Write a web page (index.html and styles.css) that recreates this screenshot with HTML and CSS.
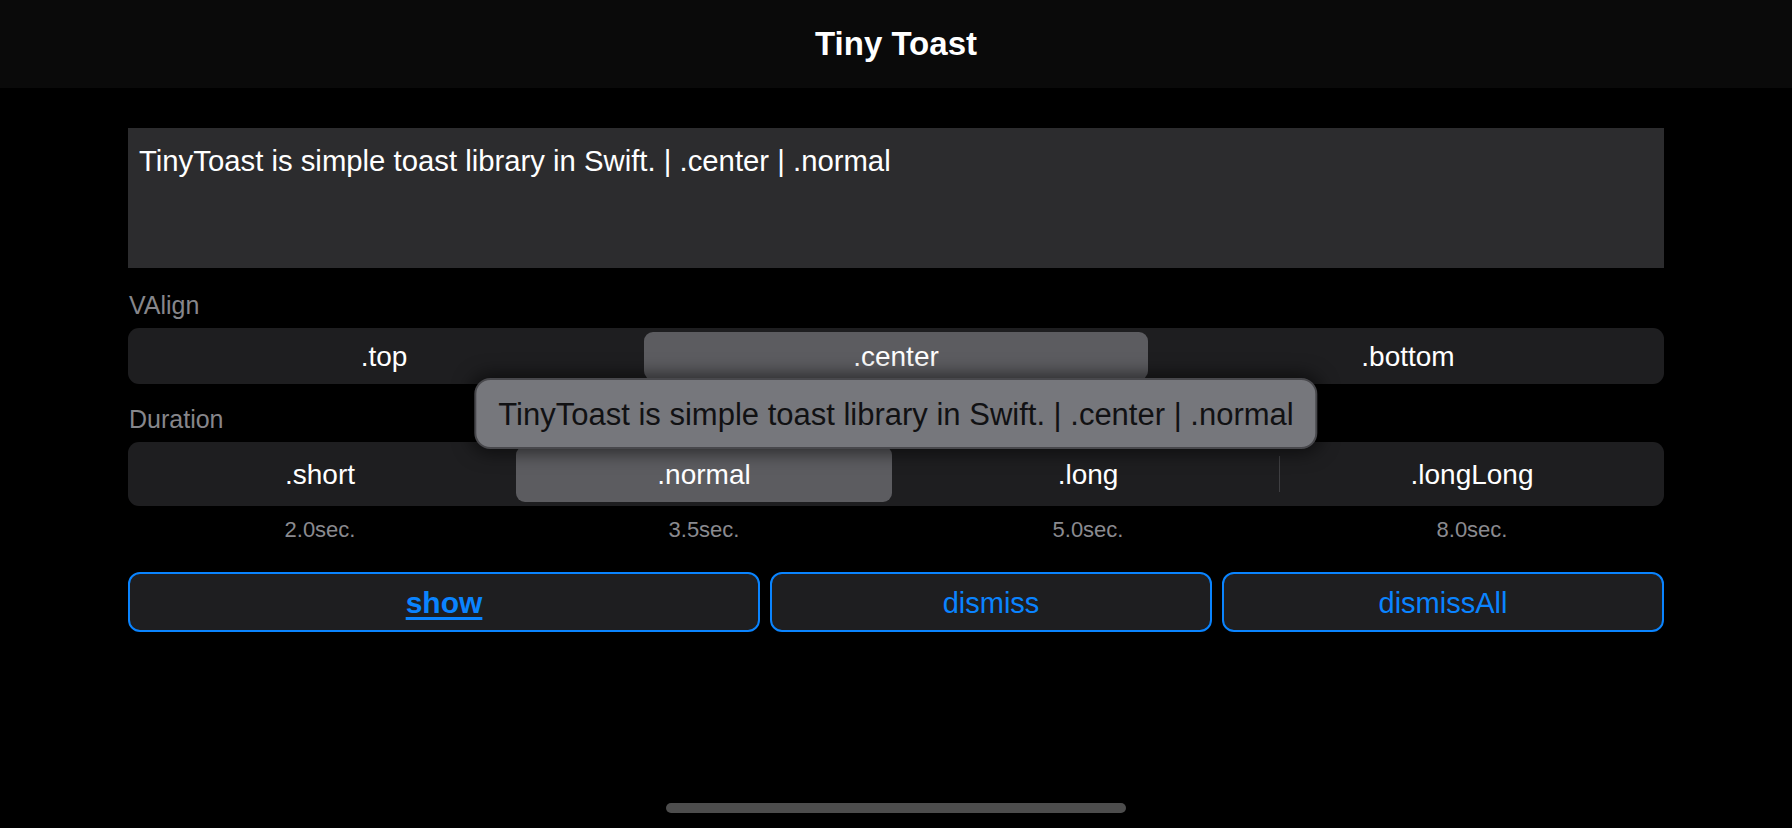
FILE: index.html
```html
<!DOCTYPE html>
<html lang="en">
<head>
<meta charset="utf-8">
<title>Tiny Toast</title>
<link rel="stylesheet" href="styles.css">
</head>
<body>
<div class="screen">
  <header class="navbar"><h1 class="nav-title">Tiny Toast</h1></header>
  <main class="content">
    <div class="textview">TinyToast is simple toast library in Swift. | .center | .normal</div>

    <div class="field-label label-valign">VAlign</div>
    <div class="segmented seg-3">
      <div class="seg">.top</div>
      <div class="seg selected">.center</div>
      <div class="seg">.bottom</div>
    </div>

    <div class="field-label label-duration">Duration</div>
    <div class="segmented seg-4">
      <div class="seg">.short</div>
      <div class="seg selected">.normal</div>
      <div class="seg">.long</div>
      <div class="seg divided">.longLong</div>
    </div>
    <div class="durations">
      <span>2.0sec.</span>
      <span>3.5sec.</span>
      <span>5.0sec.</span>
      <span>8.0sec.</span>
    </div>

    <div class="actions">
      <button class="btn btn-primary">show</button>
      <button class="btn">dismiss</button>
      <button class="btn">dismissAll</button>
    </div>
  </main>

  <div class="toast">TinyToast is simple toast library in Swift. | .center | .normal</div>
  <div class="home-indicator"></div>
</div>
</body>
</html>
```

FILE: styles.css
```css
* { box-sizing: border-box; }

html, body {
  margin: 0;
  padding: 0;
  background: #000;
}

body {
  font-family: "Liberation Sans", Arial, sans-serif;
  color: #fff;
}

.screen {
  position: relative;
  width: 1792px;
  height: 828px;
  overflow: hidden;
  background: #000;
}

.navbar {
  height: 88px;
  background: #0a0a0a;
  display: flex;
  align-items: center;
  justify-content: center;
}

.nav-title {
  margin: 0;
  font-size: 33px;
  font-weight: bold;
  color: #fff;
}

.content {
  padding: 40px 128px 0;
  display: flex;
  flex-direction: column;
}

.textview {
  height: 140px;
  background: #2c2c2e;
  padding: 16px 11px 0;
  font-size: 29.3px;
  line-height: 34px;
  color: #fff;
}

.field-label {
  font-size: 25px;
  line-height: 28px;
  color: #86868b;
  margin-left: 1px;
}

.label-valign { margin-top: 23px; margin-bottom: 9px; }
.label-duration { margin-top: 21px; margin-bottom: 9px; }

.segmented {
  display: grid;
  background: #1e1e20;
  border-radius: 11px;
}

.seg-3 { grid-template-columns: repeat(3, 1fr); height: 56px; }
.seg-4 { grid-template-columns: repeat(4, 1fr); height: 64px; }

.seg {
  position: relative;
  display: flex;
  align-items: center;
  justify-content: center;
  padding-top: 2px;
  font-size: 28px;
  color: #fff;
}

.seg.selected {
  margin: 4px;
  background: #5c5c60;
  border-radius: 9px;
}

.seg.divided::before {
  content: "";
  position: absolute;
  left: -1px;
  top: 14px;
  bottom: 14px;
  width: 1px;
  background: #3f3f42;
}

.durations {
  display: grid;
  grid-template-columns: repeat(4, 1fr);
  margin-top: 12px;
  font-size: 22px;
  line-height: 24px;
  color: #8a8a8f;
  text-align: center;
}

.actions {
  display: grid;
  grid-template-columns: 632px 1fr 1fr;
  gap: 10px;
  margin-top: 30px;
}

.btn {
  height: 60px;
  background: #1e1e20;
  border: 2px solid #0a84ff;
  border-radius: 12px;
  color: #0a84ff;
  font-family: "Liberation Sans", Arial, sans-serif;
  font-size: 29px;
  padding: 2px 0 0;
}

.btn-primary {
  font-weight: bold;
  font-size: 30px;
  text-decoration: underline;
  text-decoration-thickness: 3px;
  text-underline-offset: 4px;
}

.toast {
  position: absolute;
  top: 378px;
  left: 50%;
  transform: translateX(-50%);
  height: 71px;
  padding: 2px 22px 0;
  display: flex;
  align-items: center;
  white-space: nowrap;
  background: #76777c;
  border: 2px solid #48484c;
  border-radius: 16px;
  color: #111113;
  font-size: 31px;
  box-shadow: 0 0 18px 4px rgba(0, 0, 0, 0.55);
}

.home-indicator {
  position: absolute;
  left: 50%;
  bottom: 15px;
  width: 460px;
  height: 10px;
  margin-left: -230px;
  border-radius: 5px;
  background: #4d4d4d;
}
```
